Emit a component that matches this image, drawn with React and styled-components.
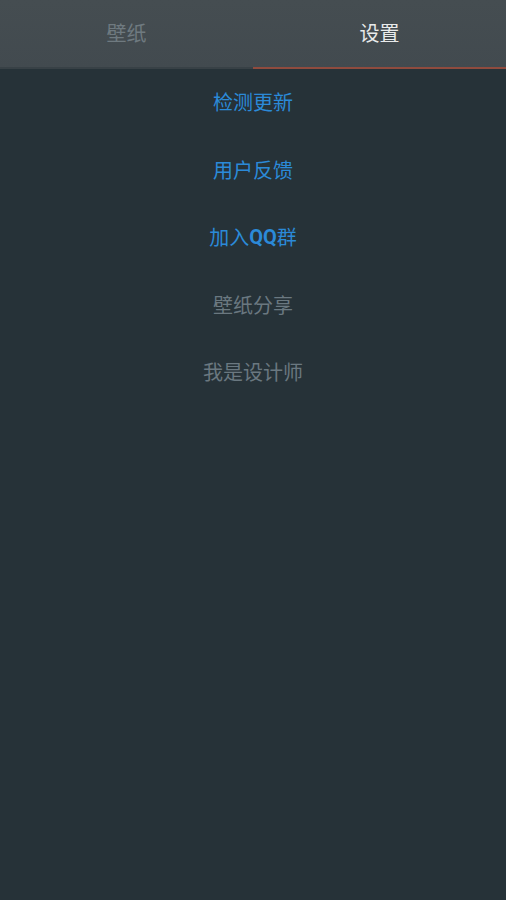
import React, { useState } from "react";
import styled, { createGlobalStyle } from "styled-components";

const GlobalStyle = createGlobalStyle`
    html, body {
        margin: 0;
        padding: 0;
        background: #263238;
    }
    body {
        font-family: "Noto Sans CJK SC", "Noto Sans", sans-serif;
    }
`;

const Page = styled.div`
    width: 506px;
    min-height: 900px;
    background: #263238;
    display: flex;
    flex-direction: column;
`;

const TabBar = styled.div`
    display: flex;
    height: 69px;
    background: linear-gradient(#454d51, #424a4f);
`;

const Tab = styled.div`
    flex: 1;
    display: flex;
    align-items: center;
    justify-content: center;
    padding-bottom: 3px;
    box-sizing: border-box;
    font-size: 20px;
    color: ${(p) => (p.$selected ? "#e8eaeb" : "#6f7a80")};
    border-bottom: 2px solid ${(p) => (p.$selected ? "#8f4b3e" : "#384146")};
    cursor: pointer;
`;

const Menu = styled.div`
    display: flex;
    flex-direction: column;
`;

const MenuItem = styled.div`
    height: 67.5px;
    display: flex;
    align-items: center;
    justify-content: center;
    padding-bottom: 2px;
    box-sizing: border-box;
    font-size: 20px;
    color: ${(p) => (p.$enabled ? "#2b8ad8" : "#6a7880")};
`;

const Latin = styled.span`
    font-family: Roboto, "Noto Sans", sans-serif;
    font-weight: 700;
`;

const tabs = ["壁纸", "设置"];

const items = [
    { key: "update", text: "检测更新", active: true },
    { key: "feedback", text: "用户反馈", active: true },
    { key: "qq", text: <>加入<Latin>QQ</Latin>群</>, active: true },
    { key: "share", text: "壁纸分享", active: false },
    { key: "designer", text: "我是设计师", active: false },
];

const App = () => {
    const [current, setCurrent] = useState(1);
    return (
        <Page>
            <GlobalStyle />
            <TabBar>
                {tabs.map((t, i) => (
                    <Tab key={t} $selected={i === current} onClick={() => setCurrent(i)}>
                        {t}
                    </Tab>
                ))}
            </TabBar>
            <Menu>
                {items.map((item) => (
                    <MenuItem key={item.key} $enabled={item.active}>
                        {item.text}
                    </MenuItem>
                ))}
            </Menu>
        </Page>
    );
};

export default App;
